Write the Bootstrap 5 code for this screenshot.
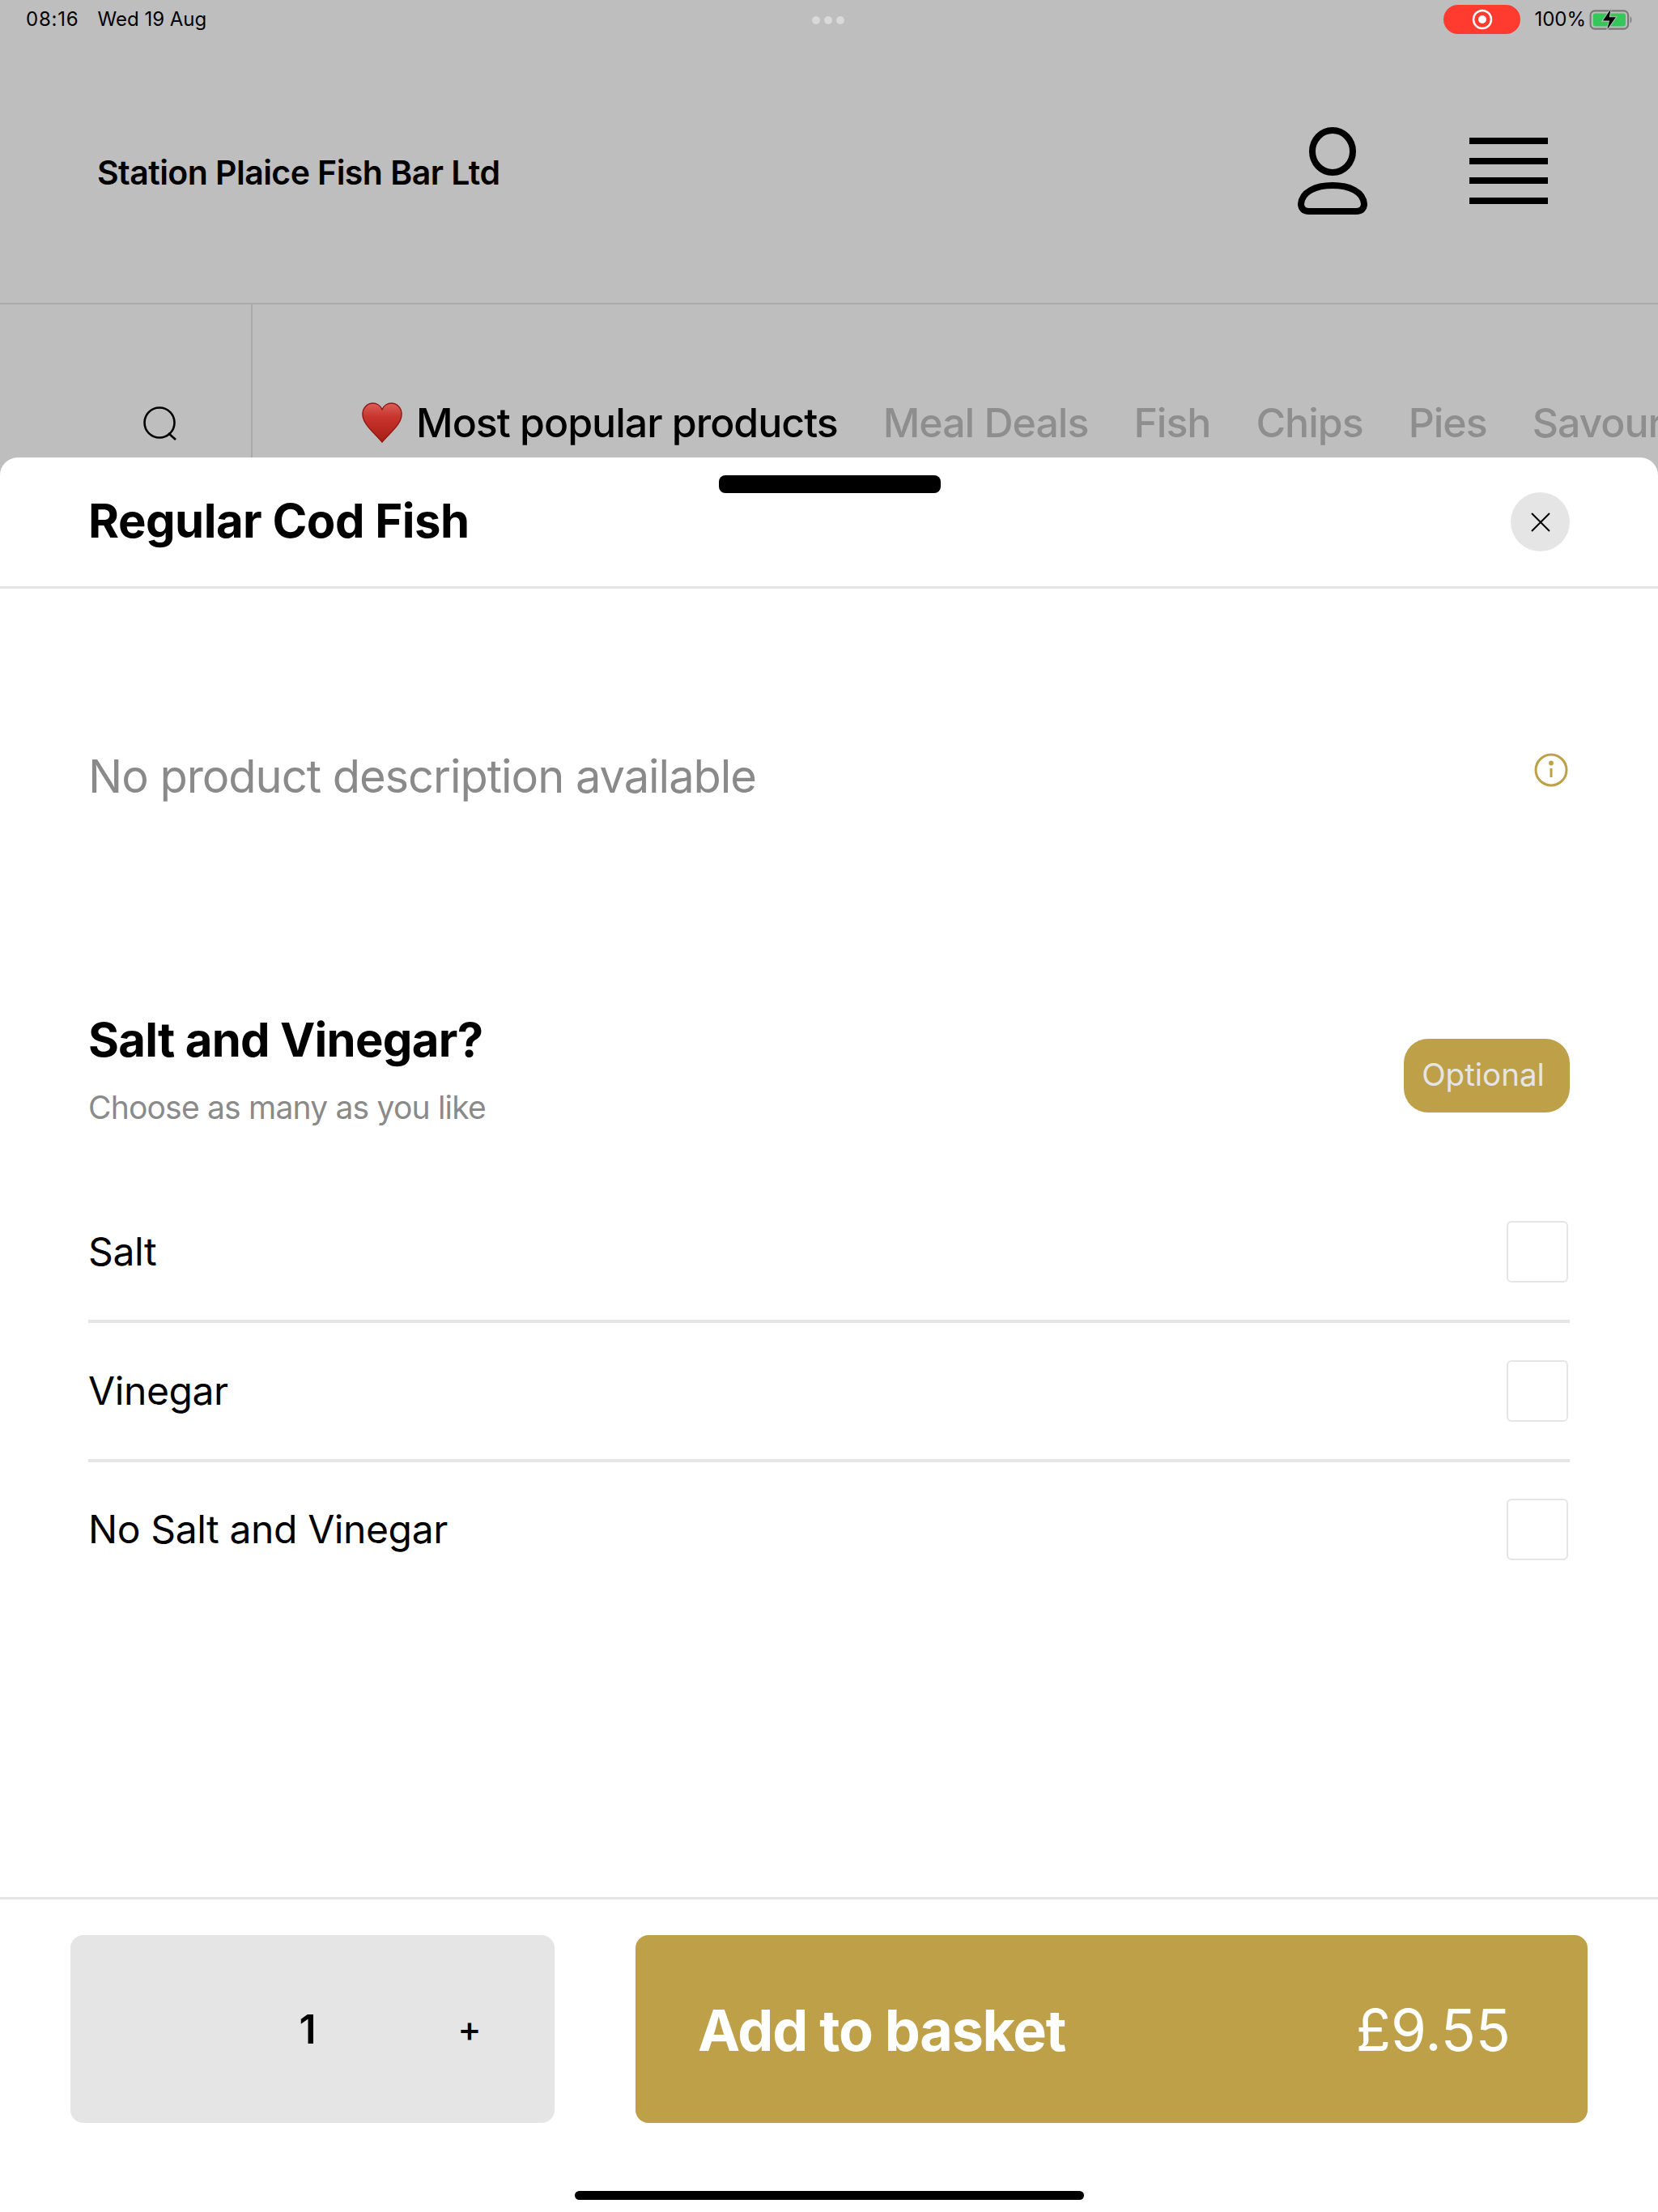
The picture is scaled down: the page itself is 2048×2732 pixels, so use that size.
<!DOCTYPE html>
<html lang="en">
<head>
    <meta charset="UTF-8">
    <title>Regular Cod Fish</title>
    <link href="https://cdn.jsdelivr.net/npm/bootstrap@5.3.2/dist/css/bootstrap.min.css" rel="stylesheet">
    <style>
        body {
            height: 2732px;
            background: #bebebe;
            font-family: "Inter", "Liberation Sans", sans-serif;
            color: #000;
            overflow: hidden;
        }

        .status-bar {
            height: 48px;
            padding: 0 0 0 32px;
            font-size: 24px;
        }

        .status-time {
            letter-spacing: .8px;
        }

        .status-date {
            margin-left: 23px;
        }

        .status-dots {
            left: 1003px;
            top: 20px;
            gap: 5px;
        }

        .status-dots span {
            width: 10px;
            height: 10px;
            border-radius: 50%;
            background: #d9d9d9;
        }

        .rec-pill {
            width: 95px;
            height: 36px;
            border-radius: 18px;
            background: #ff3b30;
        }

        .status-battery {
            margin-left: 17px;
            margin-right: 30px;
            gap: 4px;
        }

        .shop-header {
            height: 328px;
            padding-left: 120px;
            border-bottom: 2px solid #aaa;
        }

        .shop-name {
            padding-top: 5px;
            font-size: 41px;
            font-weight: 600;
            letter-spacing: -.55px;
        }

        .header-icons {
            gap: 126px;
            margin-right: 136px;
        }

        .menu-bars {
            width: 97px;
            gap: 16.5px;
        }

        .menu-bars span {
            height: 8px;
            background: #000;
        }

        .tab-row {
            height: 189px;
            overflow: hidden;
        }

        .search-cell {
            width: 312px;
            padding-top: 126px;
            padding-left: 176px;
            border-right: 2px solid #aaa;
        }

        .tab-list {
            padding-left: 135px;
            padding-top: 115px;
            gap: 56px;
            font-size: 50px;
            font-weight: 500;
            letter-spacing: -1px;
            line-height: 62px;
            color: #8e8e8e;
        }

        .tab-active {
            color: #000;
            gap: 17px;
        }

        .heart-icon {
            margin-top: 6px;
        }

        .sheet {
            background: #fff;
            border-radius: 22px 22px 0 0;
            height: 2167px;
        }

        .sheet-handle {
            left: 888px;
            top: 22px;
            width: 274px;
            height: 22px;
            border-radius: 8px;
            background: #000;
        }

        .sheet-head {
            height: 162px;
            padding: 0 109px;
            border-bottom: 3px solid #e5e5e5;
        }

        .sheet-title {
            padding-bottom: 2px;
            font-size: 58px;
            font-weight: 700;
            letter-spacing: -.5px;
            margin: 0;
        }

        .close-circle {
            width: 73px;
            height: 73px;
            background: #e5e5e5;
        }

        .desc-row {
            height: 467px;
            padding: 0 111px 4px 109px;
        }

        .desc-text {
            font-size: 56px;
            color: #8a8a8a;
            letter-spacing: -1.03px;
        }

        .group-head {
            height: 197px;
            margin-top: 32px;
            padding: 0 109px;
        }

        .group-text {
            margin-bottom: 7px;
        }

        .group-title {
            font-size: 58px;
            font-weight: 700;
            letter-spacing: -.7px;
            line-height: 70px;
        }

        .group-sub {
            font-size: 39px;
            letter-spacing: -.8px;
            color: #8a8a8a;
            line-height: 50px;
            margin-top: 24px;
        }

        .opt-pill {
            width: 205px;
            height: 91px;
            margin-top: 7px;
            padding-right: 9px;
            padding-bottom: 0;
            border-radius: 30px;
            background: #bea048;
            color: #e5e5e5;
            font-size: 38.5px;
        }

        .option-list {
            padding: 0 109px;
            margin-top: 39px;
        }

        .option-row {
            height: 172px;
            border-bottom: 4px solid #e5e5e5;
            font-size: 48px;
            letter-spacing: -.4px;
            padding-right: 2px;
        }

        .option-row:last-child {
            height: 166px;
            border-bottom: 0;
        }

        .option-box {
            width: 76px;
            height: 76px;
            border: 2px solid #e5e5e5;
            border-radius: 6px;
        }

        .sheet-foot {
            margin-top: auto;
            height: 389px;
            padding: 44px 87px 0;
            border-top: 3px solid #e5e5e5;
        }

        .qty-box {
            width: 598px;
            height: 232px;
            border-radius: 16px;
            background: #e5e5e5;
            font-size: 50px;
        }

        .qty-num {
            left: 273px;
            width: 40px;
            font-weight: 600;
            text-align: center;
        }

        .qty-plus {
            left: 473px;
            width: 40px;
            font-size: 44px;
            font-weight: 500;
            text-align: center;
        }

        .basket-btn {
            width: 1176px;
            height: 232px;
            margin-left: 100px;
            padding: 3px 95px 0 77px;
            border: 0;
            border-radius: 16px;
            background: #bea048;
            color: #fff;
            font-size: 70px;
        }

        .basket-label {
            font-weight: 700;
            letter-spacing: -1.3px;
        }

        .basket-price {
            font-size: 71px;
        }

        .home-bar {
            left: 710px;
            bottom: 15px;
            width: 629px;
            height: 11px;
            border-radius: 6px;
            background: #000;
        }
    </style>
</head>
<body>
<div class="status-bar d-flex align-items-center position-relative">
    <span class="status-time">08:16</span>
    <span class="status-date">Wed 19 Aug</span>
    <div class="status-dots d-flex position-absolute"><span></span><span></span><span></span></div>
    <div class="rec-pill d-flex align-items-center justify-content-center ms-auto">
        <svg width="26" height="26" viewBox="0 0 26 26"><circle cx="13" cy="13" r="11" fill="none" stroke="#fff" stroke-width="2.5"/><circle cx="13" cy="13" r="5" fill="#fff"/></svg>
    </div>
    <div class="status-battery d-flex align-items-center">
        <span>100%</span>
        <svg width="55" height="32" viewBox="0 0 52 30">
            <rect x="1.5" y="5" width="44" height="21" rx="5" fill="none" stroke="#777" stroke-width="2"/>
            <rect x="4.5" y="8" width="38" height="15" rx="2.5" fill="#34c759"/>
            <path d="M48 11.5c2 .8 2 7 0 8z" fill="#777"/>
            <path d="M26 1 15 17h8l-3 12 12-17h-8z" fill="#000" stroke="#bebebe" stroke-width="1"/>
        </svg>
    </div>
</div>

<header class="shop-header d-flex align-items-center justify-content-between">
    <div class="shop-name">Station Plaice Fish Bar Ltd</div>
    <div class="header-icons d-flex align-items-center">
        <svg width="86" height="108" viewBox="0 0 86 108" fill="none" stroke="#000" stroke-width="8">
            <ellipse cx="43" cy="30" rx="25" ry="26"/>
            <path d="M14 104C7 104 4 100 4 95 5 80 22 72 43 72S81 80 82 95C82 100 79 104 72 104Z"/>
        </svg>
        <div class="menu-bars d-flex flex-column"><span></span><span></span><span></span><span></span></div>
    </div>
</header>

<div class="tab-row d-flex">
    <div class="search-cell d-flex flex-shrink-0">
        <svg width="44" height="44" viewBox="0 0 44 44" fill="none" stroke="#000" stroke-width="2.6">
            <circle cx="21" cy="20" r="18.5"/>
            <path d="M32 33l9 8"/>
        </svg>
    </div>
    <div class="tab-list d-flex text-nowrap">
        <span class="tab-active d-flex">
            <svg width="50" height="50" viewBox="0 0 52 52" class="heart-icon flex-shrink-0">
                <defs>
                    <linearGradient id="heartFill" x1="0" y1="0" x2="0" y2="1">
                        <stop offset="0" stop-color="#d9605a"/>
                        <stop offset=".35" stop-color="#c8352d"/>
                        <stop offset="1" stop-color="#a81d15"/>
                    </linearGradient>
                </defs>
                <path d="M26 51C15 38 1 28 1 15 1 6 8 1 14 1c5 0 10 3 12 8 2-5 7-8 12-8 6 0 13 5 13 14 0 13-14 23-25 36Z" fill="url(#heartFill)" stroke="#8f1a12" stroke-width="1.5"/>
            </svg>
            <span>Most popular products</span>
        </span>
        <span>Meal Deals</span>
        <span>Fish</span>
        <span>Chips</span>
        <span>Pies</span>
        <span>Savoury</span>
    </div>
</div>

<div class="sheet position-relative d-flex flex-column">
    <div class="sheet-handle position-absolute"></div>
    <div class="sheet-head d-flex align-items-center justify-content-between">
        <h1 class="sheet-title">Regular Cod Fish</h1>
        <div class="close-circle rounded-circle d-flex align-items-center justify-content-center">
            <svg width="26" height="26" viewBox="0 0 26 26" stroke="#000" stroke-width="2"><path d="M2 2l22 22M24 2 2 24"/></svg>
        </div>
    </div>

    <div class="desc-row d-flex align-items-center justify-content-between">
        <div class="desc-text">No product description available</div>
        <svg width="42" height="42" viewBox="0 0 42 42" class="mb-3" fill="none" stroke="#bea048" stroke-width="3">
            <circle cx="21" cy="21" r="19"/>
            <path d="M21 19v11"/>
            <circle cx="21" cy="12.5" r="1.4" fill="#bea048"/>
        </svg>
    </div>

    <div class="group-head d-flex align-items-center justify-content-between">
        <div class="group-text">
            <div class="group-title">Salt and Vinegar?</div>
            <div class="group-sub">Choose as many as you like</div>
        </div>
        <div class="opt-pill d-flex align-items-center justify-content-center">Optional</div>
    </div>

    <div class="option-list">
        <div class="option-row d-flex align-items-center justify-content-between">Salt<div class="option-box"></div></div>
        <div class="option-row d-flex align-items-center justify-content-between">Vinegar<div class="option-box"></div></div>
        <div class="option-row d-flex align-items-center justify-content-between">No Salt and Vinegar<div class="option-box"></div></div>
    </div>

    <div class="sheet-foot d-flex align-items-start">
        <div class="qty-box position-relative d-flex align-items-center">
            <span class="qty-num position-absolute">1</span>
            <span class="qty-plus position-absolute">+</span>
        </div>
        <button type="button" class="basket-btn d-flex align-items-center justify-content-between">
            <span class="basket-label">Add to basket</span>
            <span class="basket-price">£9.55</span>
        </button>
    </div>
    <div class="home-bar position-absolute"></div>
</div>
<script src="https://cdn.jsdelivr.net/npm/bootstrap@5.3.2/dist/js/bootstrap.bundle.min.js"></script>
</body>
</html>
